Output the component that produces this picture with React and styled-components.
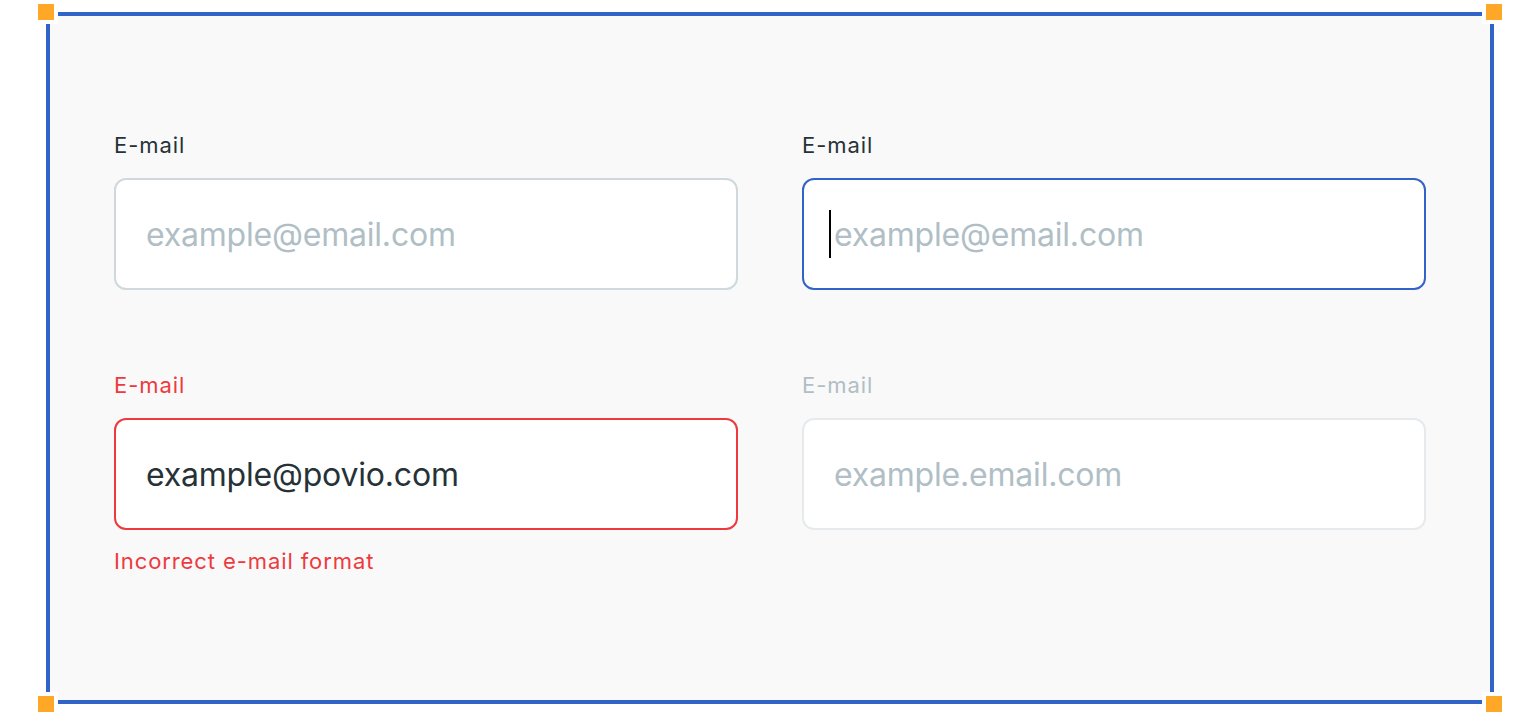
import React from "react";
import styled, { createGlobalStyle } from "styled-components";

const GlobalStyle = createGlobalStyle`
  html, body {
    margin: 0;
    padding: 0;
    background: #ffffff;
    font-family: Inter, "Noto Sans", sans-serif;
  }
`;

const Page = styled.div`
  padding: 12px 46px;
  height: 716px;
  box-sizing: border-box;
`;

const Frame = styled.div`
  position: relative;
  height: 100%;
  box-sizing: border-box;
  border: 4px solid #3264c8;
  background: #f9f9f9;
  padding: 115px 64px 0;
`;

const Handle = styled.span`
  position: absolute;
  width: 24px;
  height: 24px;
  box-sizing: border-box;
  border: 4px solid #ffffff;
  background: #ffa726;
  ${(p) => (p.$top ? "top: -16px;" : "bottom: -16px;")}
  ${(p) => (p.$left ? "left: -16px;" : "right: -16px;")}
`;

const Grid = styled.div`
  display: grid;
  grid-template-columns: 624px 624px;
  column-gap: 64px;
  row-gap: 81px;
  align-items: start;
`;

const Field = styled.div`
  display: flex;
  flex-direction: column;
`;

const labelColors = {
  default: "#263238",
  focus: "#263238",
  error: "#ee3a3e",
  disabled: "#b0bec5",
};

const borderColors = {
  default: "#cfd8dc",
  focus: "#3264c8",
  error: "#ee3a3e",
  disabled: "#e6eaec",
};

const Label = styled.div`
  font-size: 22px;
  line-height: 28px;
  letter-spacing: 0.95px;
  color: ${(p) => labelColors[p.$state]};
  margin-bottom: 19px;
`;

const InputBox = styled.div`
  height: 112px;
  box-sizing: border-box;
  border: 2px solid ${(p) => borderColors[p.$state]};
  border-radius: 12px;
  background: #ffffff;
  display: flex;
  align-items: center;
  padding: 0 30px;
  font-size: 32px;
  letter-spacing: -0.2px;
  color: ${(p) => (p.$filled ? "#263238" : "#b0bec5")};
  white-space: nowrap;
`;

const Caret = styled.span`
  display: inline-block;
  width: 2px;
  height: 48px;
  background: #000000;
  margin-left: -5px;
  margin-right: 3px;
`;

const Helper = styled.div`
  margin-top: 17px;
  font-size: 22px;
  line-height: 28px;
  letter-spacing: 0.9px;
  color: #ee3a3e;
`;

const EmailField = ({ state = "default", value, placeholder, helper }) => (
  <Field>
    <Label $state={state}>E-mail</Label>
    <InputBox $state={state} $filled={!!value}>
      {state === "focus" && <Caret />}
      {value || placeholder}
    </InputBox>
    {helper && <Helper>{helper}</Helper>}
  </Field>
);

const App = () => (
  <>
    <GlobalStyle />
    <Page>
      <Frame>
        <Handle $top $left />
        <Handle $top />
        <Handle $left />
        <Handle />
        <Grid>
          <EmailField placeholder="example@email.com" />
          <EmailField state="focus" placeholder="example@email.com" />
          <EmailField
            state="error"
            value="example@povio.com"
            helper="Incorrect e-mail format"
          />
          <EmailField state="disabled" placeholder="example.email.com" />
        </Grid>
      </Frame>
    </Page>
  </>
);

export default App;
